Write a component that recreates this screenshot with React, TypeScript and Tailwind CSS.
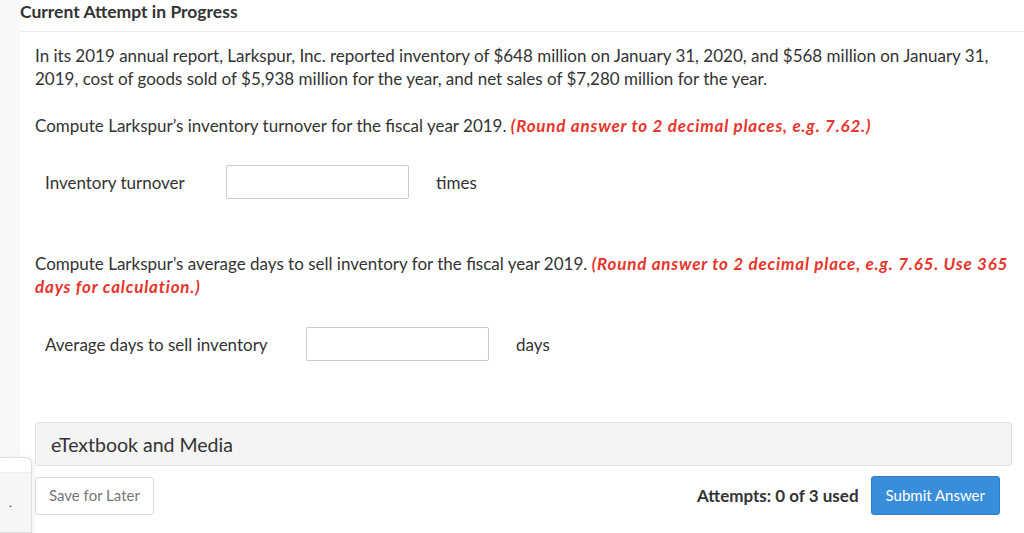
import React from 'react';

const font = { fontFamily: 'Lato, "Noto Sans", sans-serif' };

function AnswerRow({ label, unit, inputLeft }: { label: string; unit: string; inputLeft: string }) {
  return (
    <div className="flex items-center pl-[10px]">
      <span className={`${inputLeft} shrink-0 text-[17px] text-[#333]`}>{label}</span>
      <input className="h-[34px] w-[183px] rounded-[2px] border border-[#ccc] bg-white px-2 outline-none" />
      <span className="ml-[27px] text-[17px] text-[#333]">{unit}</span>
    </div>
  );
}

export default function App() {
  return (
    <div className="relative flex h-[533px] w-[1024px] overflow-hidden bg-white" style={font}>
      <div className="w-[20px] shrink-0 bg-[#f8f8f8]" />

      <div className="flex-1">
        <div className="h-[32px] border-b border-[#ececec]">
          <h2 className="pt-[1px] text-[17.5px] font-bold leading-[22px] text-[#333]">Current Attempt in Progress</h2>
        </div>

        <div className="pl-[15px] pr-[12px] pt-[12px] text-[17px] leading-[23px] text-[#333]">
          <p>
            In its 2019 annual report, Larkspur, Inc. reported inventory of $648 million on January 31, 2020, and $568 million on January 31, 2019, cost of goods sold of $5,938 million for the year, and net sales of $7,280 million for the year.
          </p>

          <p className="mt-[24px]">
            Compute Larkspur’s inventory turnover for the fiscal year 2019.{' '}
            <span className="font-bold italic tracking-[0.8px] text-[#e8352b]">(Round answer to 2 decimal places, e.g. 7.62.)</span>
          </p>

          <div className="mt-[28px]">
            <AnswerRow label="Inventory turnover" unit="times" inputLeft="w-[181px]" />
          </div>

          <p className="mt-[53px]">
            Compute Larkspur’s average days to sell inventory for the fiscal year 2019.{' '}
            <span className="font-bold italic tracking-[0.8px] text-[#e8352b]">(Round answer to 2 decimal place, e.g. 7.65. Use 365 days for calculation.)</span>
          </p>

          <div className="mt-[29px]">
            <AnswerRow label="Average days to sell inventory" unit="days" inputLeft="w-[261px]" />
          </div>

          <div className="mt-[61px] flex h-[44px] items-center rounded-[3px] border border-[#e0e0e0] bg-[#f4f4f4] px-[15px]">
            <span className="text-[19.5px] text-[#333]">eTextbook and Media</span>
          </div>

          <div className="mt-[10px] flex items-center">
            <button className="h-[38px] rounded-[3px] border border-[#ddd] bg-white px-[13px] text-[15px] text-[#777]">Save for Later</button>
            <div className="flex-1" />
            <span className="text-[17px] font-bold text-[#333]">Attempts: 0 of 3 used</span>
            <button className="ml-[12px] mr-[12px] h-[39px] rounded-[3px] border border-[#2f7fcf] bg-[#3a8ddb] px-[14px] text-[15px] text-white">Submit Answer</button>
          </div>
        </div>
      </div>

      <div className="absolute bottom-0 left-0 top-[457px] w-[32px] overflow-hidden rounded-tr-[6px] border border-l-0 border-[#ddd] bg-white shadow-[2px_0_4px_rgba(0,0,0,0.06)]">
        <div className="mt-[14px] h-full border-t border-[#eee] bg-[#f6f6f6] pl-[9px] pt-[24px] text-[12px] leading-none text-[#333]">.</div>
      </div>
    </div>
  );
}
